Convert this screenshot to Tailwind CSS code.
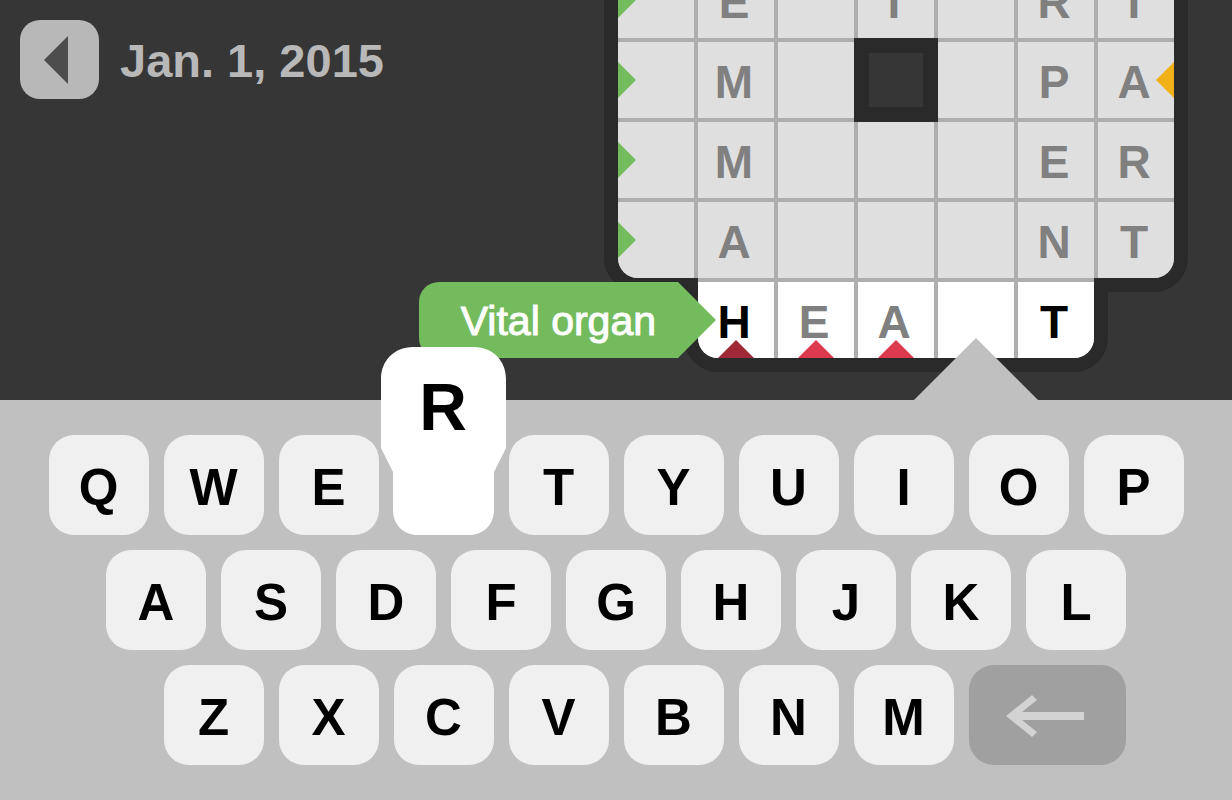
<!DOCTYPE html>
<html lang="en">
<head>
  <meta charset="UTF-8" />
  <meta name="viewport" content="width=device-width, initial-scale=1.0" />
  <title>Crossword - Jan. 1, 2015</title>
  <script src="https://cdn.jsdelivr.net/npm/@tailwindcss/browser@4"></script>
</head>
<body class="h-screen flex flex-col overflow-hidden bg-[#363636] font-['Liberation_Sans',Arial,sans-serif]">

  <main class="flex-1 min-h-0 flex justify-between pl-5 pr-[58px]">
    <!-- Header -->
    <header class="flex items-center gap-[21px] self-start pt-5">
      <button type="button" aria-label="Back" class="size-[79px] shrink-0 rounded-[20px] bg-[#b8b8b8] flex items-center pl-6">
        <svg width="24" height="48" viewBox="0 0 24 48" fill="#4d4d4d"><path d="M0 24 24 0v48z" /></svg>
      </button>
      <h1 class="text-[47px] leading-none font-bold text-[#b8b8b8] whitespace-nowrap pt-[2px]">Jan. 1, 2015</h1>
    </header>

    <!-- Board, scrolled so that the active row sits above the keyboard -->
    <div class="relative isolate self-end shrink-0 pb-[42px]">
      <div class="relative">
        <div class="absolute inset-0 -z-10 rounded-b-[20px] ring-[14px] ring-[#2a2a2a]"></div>
        <div id="grid" class="grid grid-cols-7 gap-1 overflow-hidden rounded-b-[20px] bg-[#aeaeae]"></div>
      </div>
      <div class="relative w-fit ml-20">
        <div class="absolute inset-0 -z-10 rounded-b-[20px] ring-[14px] ring-[#2a2a2a]"></div>
        <div id="activeRow" class="grid grid-cols-5 gap-1 pt-1 rounded-b-[20px] bg-[#aeaeae]"></div>
      </div>
    </div>
  </main>

  <!-- Keyboard -->
  <section aria-label="Keyboard" class="relative z-10 bg-[#c0c0c0] px-12 py-[35px]">
    <div id="keyboard" class="mx-auto max-w-[1135px] grid grid-cols-20 gap-[15px]"></div>
  </section>

  <script>
    // "#" is a blocked square, a space is an empty one
    const rows = [
      " E I RI",
      " M # PA",
      " M   ER",
      " A   NT"
    ];

    const greenArrow = `<svg class="absolute left-0 top-5" width="18" height="36" viewBox="0 0 18 36" fill="#74bb5e"><path d="M0 0 18 18 0 36z" /></svg>`;
    const yellowArrow = `<svg class="absolute right-0 top-5" width="18" height="36" viewBox="0 0 18 36" fill="#f1b017"><path d="M18 0 0 18 18 36z" /></svg>`;

    const grid = document.getElementById("grid");
    rows.forEach((row, r) => {
      [...row].forEach((letter, c) => {
        const cell = document.createElement("div");
        cell.className = "relative size-[76px] bg-[#dfdfdf] flex items-center justify-center pt-[3px] pr-1 text-[46px] leading-none font-bold text-[#808080]";
        if (letter === "#") {
          cell.innerHTML = `<div class="absolute -inset-1 border-[15px] border-[#2a2a2a] bg-[#363636]"></div>`;
        } else {
          cell.innerHTML = letter.trim() + (c === 0 ? greenArrow : "") + (r === 1 && c === 6 ? yellowArrow : "");
        }
        grid.appendChild(cell);
      });
    });

    const clue = `
      <div class="absolute right-[58px] inset-y-0 flex">
        <div class="flex items-center rounded-l-[20px] bg-[#74bb5e] pl-[42px] pr-[22px] pt-[2px] text-[41px] font-normal text-white whitespace-nowrap [-webkit-text-stroke:1px_white]">Vital organ</div>
        <svg class="shrink-0" width="38" height="76" viewBox="0 0 38 76" fill="#74bb5e"><path d="M0 0 38 38 0 76z" /></svg>
      </div>`;
    const pointer = `<svg class="absolute left-1/2 -translate-x-1/2 top-14" width="124" height="62" viewBox="0 0 124 62" fill="#c0c0c0"><path d="M62 0 124 62H0z" /></svg>`;
    const marker = (color) => `<svg class="absolute left-5 bottom-0" width="36" height="18" viewBox="0 0 36 18" fill="${color}"><path d="M18 0 36 18H0z" /></svg>`;

    const active = [
      { letter: "H", style: "text-black rounded-bl-[20px]", extra: clue + marker("#a02839") },
      { letter: "E", style: "text-[#808080]", extra: marker("#dd394f") },
      { letter: "A", style: "text-[#808080]", extra: marker("#dd394f") },
      { letter: "", style: "z-10", extra: pointer },
      { letter: "T", style: "text-black rounded-br-[20px]", extra: "" }
    ];
    active.forEach((a) => {
      const cell = document.createElement("div");
      cell.className = "relative size-[76px] bg-white flex items-center justify-center pt-[3px] pr-1 text-[46px] leading-none font-bold " + a.style;
      cell.innerHTML = a.letter + a.extra;
      document.getElementById("activeRow").appendChild(cell);
    });

    // Keys span two columns, so every row can start half a key further in
    const keyboard = document.getElementById("keyboard");
    const starts = { Q: "col-start-1", A: "col-start-2", Z: "col-start-3" };
    [..."QWERTYUIOPASDFGHJKLZXCVBNM"].forEach((letter) => {
      const key = document.createElement("button");
      key.type = "button";
      key.className = "relative col-span-2 h-[100px] rounded-[25px] bg-[#f0f0f0] pt-[5px] text-[51px] leading-none font-bold text-black";
      if (starts[letter]) {
        key.className = key.className.replace("col-span-2", "col-end-[span_2] " + starts[letter]);
      }
      if (letter === "R") {
        key.innerHTML = `
          <span class="absolute bottom-0 -left-[13px] w-[125px] h-[188px] pt-[27px] text-[66px]">
            <svg class="absolute inset-0" width="125" height="188" viewBox="0 0 125 188" fill="#fff">
              <path d="M32 0H93C112 0 125 14 125 32V101L113 125V163C113 178 102 188 88 188H37C23 188 12 178 12 163V125L0 101V32C0 14 13 0 32 0z" />
            </svg>
            <span class="relative">R</span>
          </span>`;
        key.classList.replace("bg-[#f0f0f0]", "bg-transparent");
      } else {
        key.textContent = letter;
      }
      keyboard.appendChild(key);
    });

    const backspace = document.createElement("button");
    backspace.type = "button";
    backspace.ariaLabel = "Backspace";
    backspace.className = "col-span-3 h-[100px] rounded-[25px] bg-[#a0a0a0] flex items-center justify-center pt-[2px] pr-1";
    backspace.innerHTML = `<svg width="78" height="42" viewBox="0 0 78 42" fill="#d3d3d3"><path d="M0 21 26 0 31 5 16 17H78V25H16L31 37 26 42z" /></svg>`;
    keyboard.appendChild(backspace);
  </script>
</body>
</html>
